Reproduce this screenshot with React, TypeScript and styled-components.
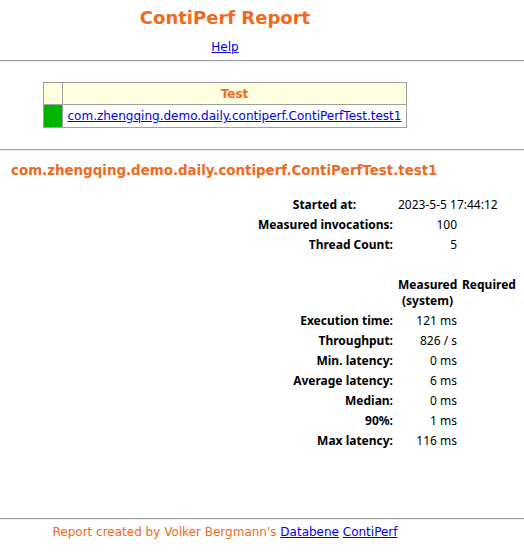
import styled, { createGlobalStyle } from "styled-components"

const GlobalStyle = createGlobalStyle`
    body {
        margin: 0;
        background: #fff;
        font-family: "DejaVu Sans", Verdana, sans-serif;
    }
`

const orange = "#ef6a1d"
const rule = "#a0a0a0"

type Stat = { label: string, value: string }

const general: Stat[] = [
    { label: "Measured invocations:", value: "100" },
    { label: "Thread Count:", value: "5" },
]

const measured: Stat[] = [
    { label: "Execution time:", value: "121 ms" },
    { label: "Throughput:", value: "826 / s" },
    { label: "Min. latency:", value: "0 ms" },
    { label: "Average latency:", value: "6 ms" },
    { label: "Median:", value: "0 ms" },
    { label: "90%:", value: "1 ms" },
    { label: "Max latency:", value: "116 ms" },
]

const testName = "com.zhengqing.demo.daily.contiperf.ContiPerfTest.test1"

const App = () => {
    return (
        <Page>
            <GlobalStyle />
            <Centered>
                <Title>ContiPerf Report</Title>
                <HelpLine><Link href="#">Help</Link></HelpLine>
            </Centered>
            <Rule $top={5} />
            <Centered>
                <TestTable>
                    <thead>
                        <tr>
                            <HeadCell $narrow />
                            <HeadCell>Test</HeadCell>
                        </tr>
                    </thead>
                    <tbody>
                        <tr>
                            <StatusCell />
                            <NameCell><Link href="#">{testName}</Link></NameCell>
                        </tr>
                    </tbody>
                </TestTable>
            </Centered>
            <Rule $top={21} />
            <TestHeading>{testName}</TestHeading>

            <StatsGrid $top={15}>
                <Label $shift={37}>Started at:</Label>
                <Value $left $span>2023-5-5 17:44:12</Value>
                {general.map(s => (
                    <Row key={s.label}>
                        <Label>{s.label}</Label>
                        <Value>{s.value}</Value>
                    </Row>
                ))}
            </StatsGrid>

            <StatsGrid $top={22}>
                <span />
                <ColHead>Measured<br />(system)</ColHead>
                <ColHead $left>Required</ColHead>
                {measured.map(s => (
                    <Row key={s.label}>
                        <Label>{s.label}</Label>
                        <Value>{s.value}</Value>
                    </Row>
                ))}
            </StatsGrid>

            <Rule $top={67} />
            <Centered>
                <Footer>
                    Report created by Volker Bergmann's <Link href="#">Databene</Link> <Link href="#">ContiPerf</Link>
                </Footer>
            </Centered>
        </Page>
    )
}

export default App;

const Page = styled.div`
    width: 524px;
    min-height: 552px;
`

const Centered = styled.div`
    width: 450px;
    display: flex;
    flex-direction: column;
    align-items: center;
    text-align: center;
`

const Title = styled.h1`
    margin: 6px 0 0;
    font-size: 18px;
    line-height: 24px;
    font-weight: bold;
    color: ${orange};
`

const HelpLine = styled.div`
    margin-top: 9px;
    font-size: 12px;
    line-height: 16px;
`

const Link = styled.a`
    color: #0000ee;
    text-decoration: underline;
`

const Rule = styled.hr<{ $top: number }>`
    margin: ${p => p.$top}px 0 0;
    height: 0;
    border: none;
    border-top: 1px solid ${rule};
    border-bottom: 1px solid #eeeeee;
`

const TestTable = styled.table`
    margin-top: 20px;
    border-collapse: collapse;
    border: 1px solid ${rule};
    font-size: 12px;
`

const HeadCell = styled.th<{ $narrow?: boolean }>`
    height: 21px;
    width: ${p => p.$narrow ? "18px" : "auto"};
    padding: ${p => p.$narrow ? "0" : "0 5px"};
    border: 1px solid ${rule};
    background: #ffffe0;
    color: ${orange};
    font-weight: bold;
    text-align: center;
`

const StatusCell = styled.td`
    width: 18px;
    padding: 0;
    border: 1px solid ${rule};
    background: #00b400;
`

const NameCell = styled.td`
    height: 22px;
    padding: 0 5px;
    border: 1px solid ${rule};
    text-align: left;
`

const TestHeading = styled.h2`
    margin: 11px 0 0 11px;
    font-size: 13.4px;
    line-height: 18px;
    font-weight: bold;
    color: ${orange};
`

const StatsGrid = styled.div<{ $top: number }>`
    margin-top: ${p => p.$top}px;
    display: grid;
    grid-template-columns: 393px 64px 1fr;
    font-family: "Noto Sans", "Open Sans", sans-serif;
    font-size: 12px;
    color: #000;
`

const Row = styled.div`
    display: contents;
`

const Label = styled.div<{ $shift?: number }>`
    grid-column: 1;
    line-height: 20px;
    font-weight: bold;
    text-align: right;
    padding-right: ${p => p.$shift ?? 0}px;
`

const Value = styled.div<{ $left?: boolean, $span?: boolean }>`
    grid-column: ${p => p.$span ? "2 / 4" : "2"};
    line-height: 20px;
    padding-left: 5px;
    text-align: ${p => p.$left ? "left" : "right"};
`

const ColHead = styled.div<{ $left?: boolean }>`
    padding: 0 0 2px 5px;
    line-height: 16px;
    font-weight: bold;
    text-align: ${p => p.$left ? "left" : "center"};
`

const Footer = styled.div`
    margin-top: 4px;
    font-size: 12px;
    line-height: 16px;
    color: ${orange};
`
